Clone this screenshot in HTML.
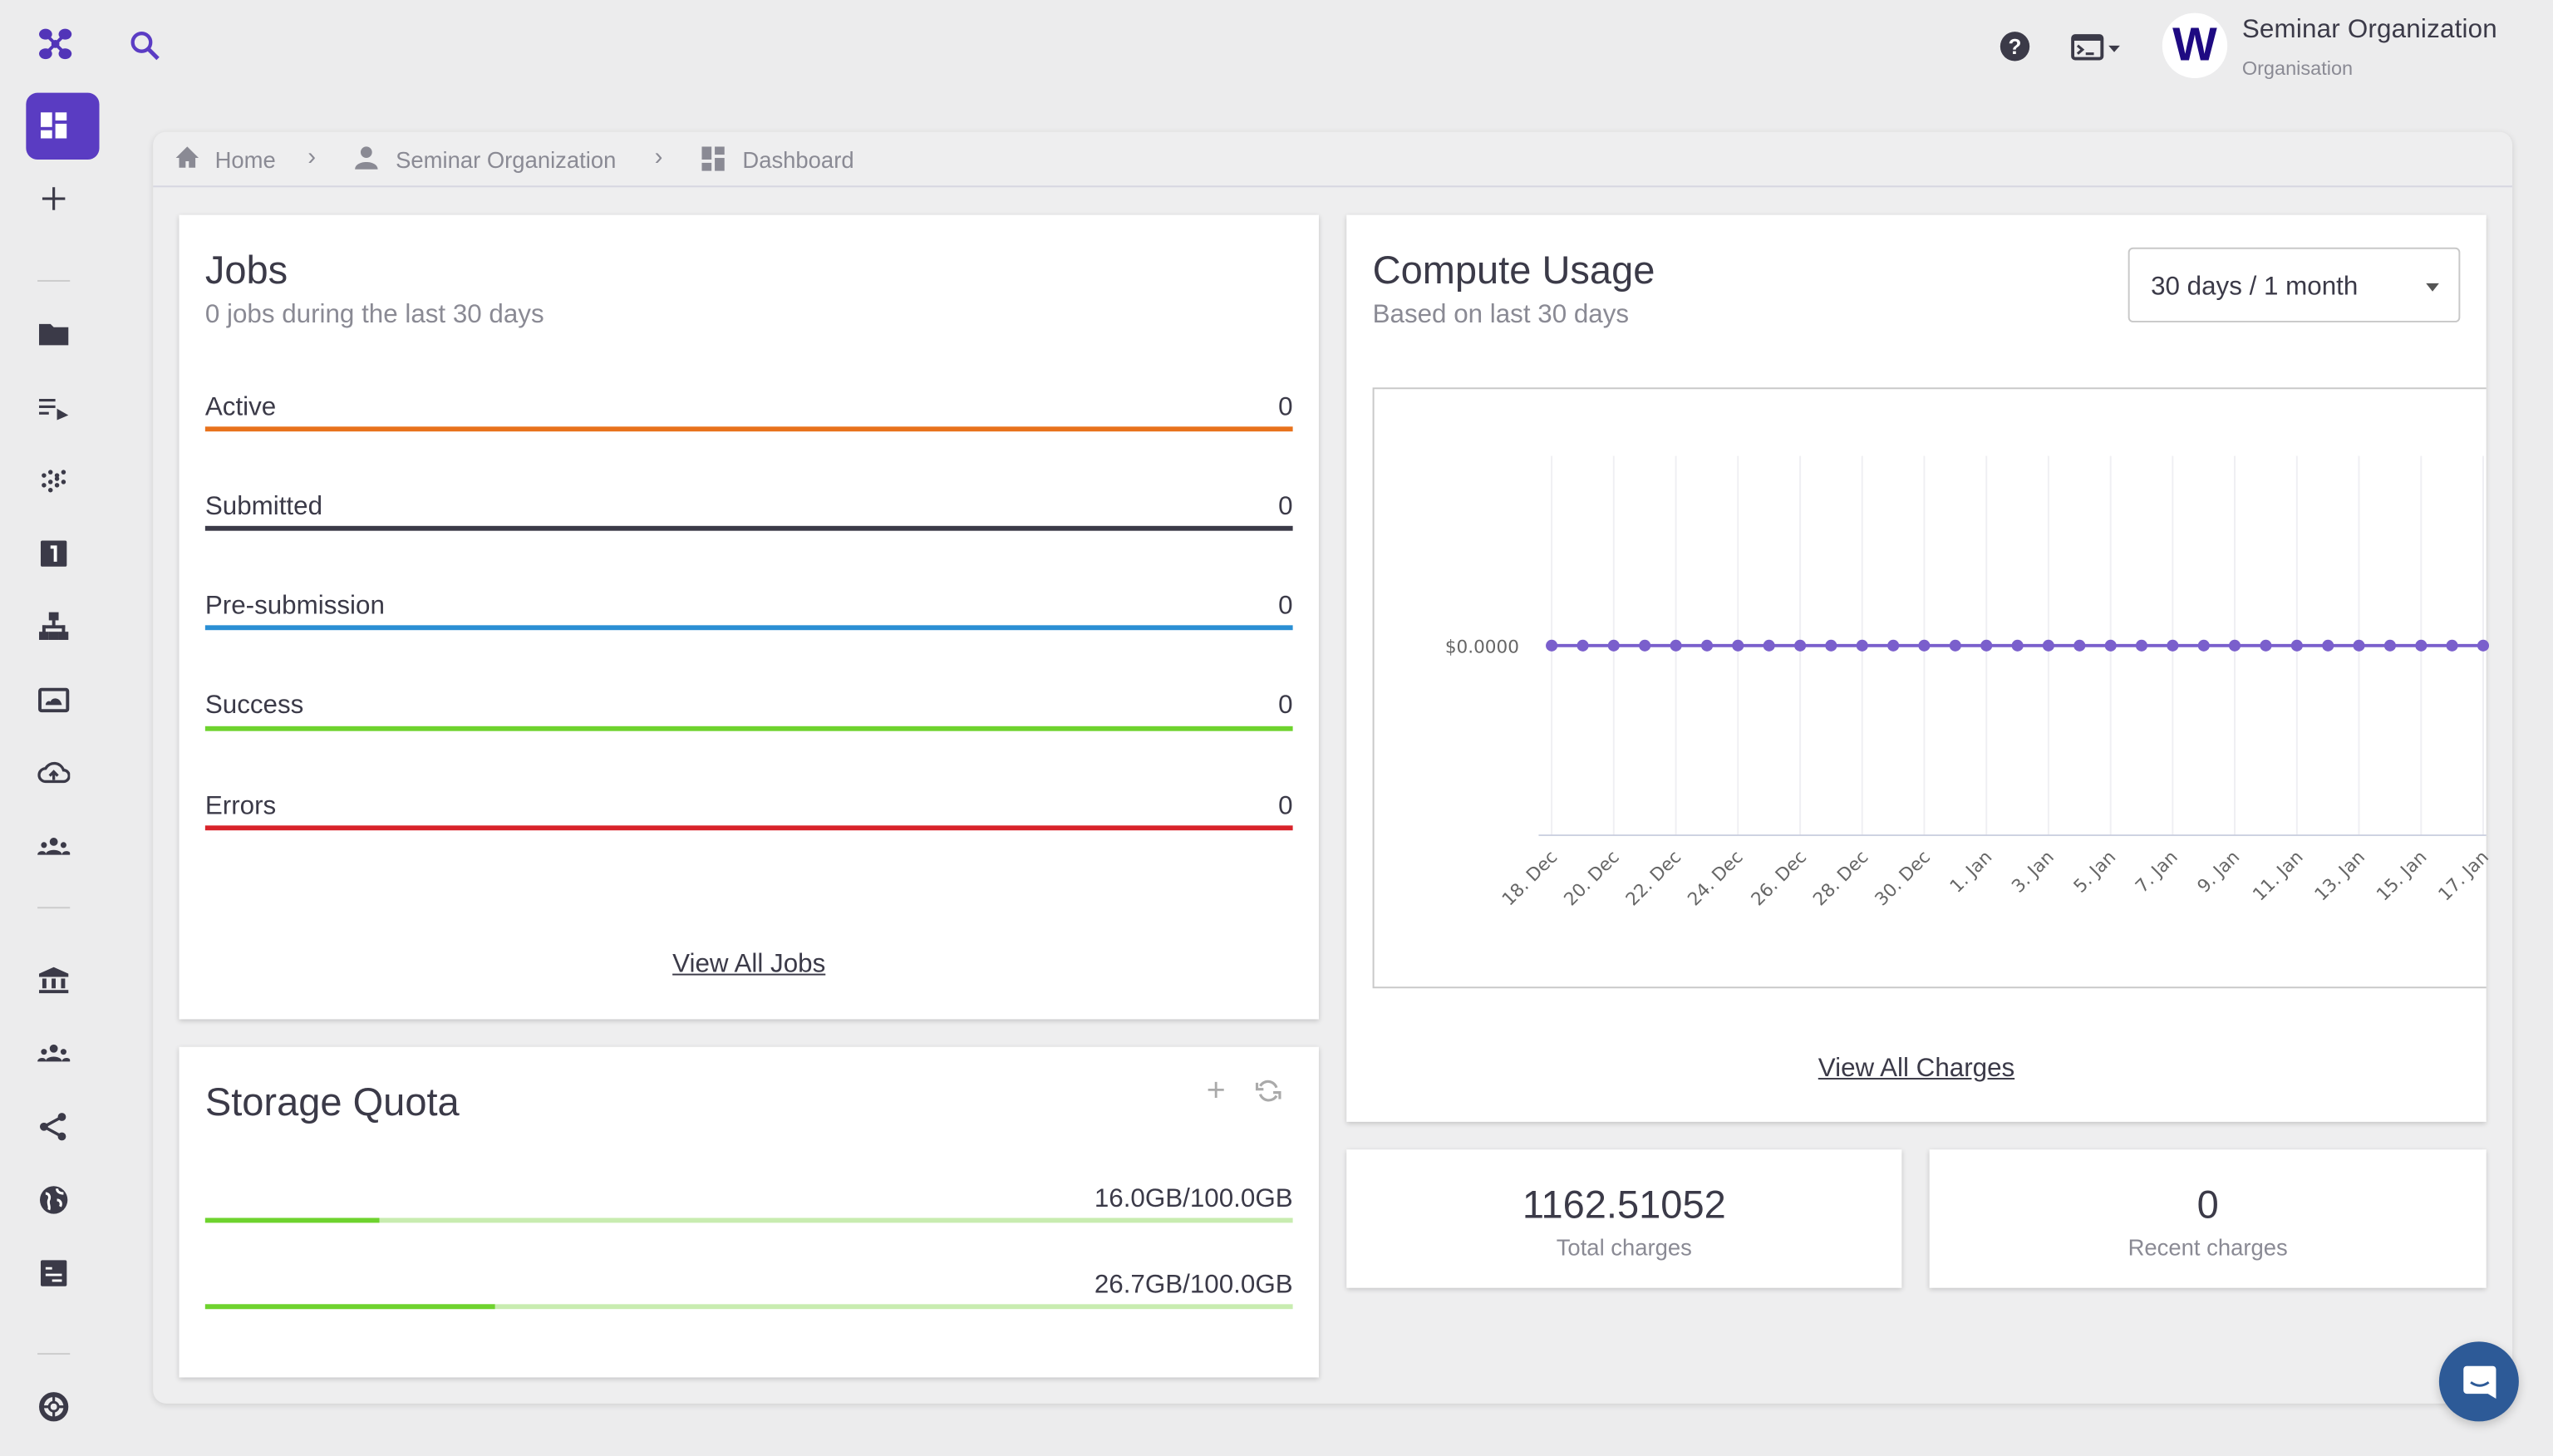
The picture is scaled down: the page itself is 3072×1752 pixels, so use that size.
<!DOCTYPE html>
<html><head><meta charset="utf-8"><style>
*{margin:0;padding:0;box-sizing:border-box}
html,body{width:3072px;height:1752px;overflow:hidden;background:#ececed}
#r{position:absolute;left:0;top:0;width:1568px;height:894px;transform:scale(1.9592);transform-origin:0 0;font-family:"Liberation Sans",sans-serif;color:#3b3a48}
.a{position:absolute}
.card{position:absolute;background:#fff;box-shadow:0 1px 3px rgba(0,0,0,.18)}
.lbl{position:absolute;left:16px;right:16px;font-size:16px;color:#3b3a48}
.lbl span{position:absolute;right:0}
.bar{position:absolute;left:16px;right:16px;height:3px}
.ic{position:absolute;left:23px;width:20px;height:20px}
.div{position:absolute;left:23px;width:20px;height:1px;background:#ccc}
</style></head><body><div id="r">
<svg class="a" style="left:23px;top:17px" width="22" height="20" viewBox="0 0 22 20"><g fill="#5235b8"><ellipse cx="5" cy="4" rx="4" ry="3.3"/><ellipse cx="17" cy="4" rx="4" ry="3.3"/><ellipse cx="5" cy="16" rx="4" ry="3.3"/><ellipse cx="17" cy="16" rx="4" ry="3.3"/><circle cx="11" cy="10" r="2.5"/></g><path d="M5 4L11 10L17 4M5 16L11 10L17 16" stroke="#5235b8" stroke-width="2" fill="none"/></svg>
<svg class="a" style="left:79px;top:18px" width="20" height="20" viewBox="0 0 20 20"><circle cx="8" cy="8" r="5.5" stroke="#5b3cc4" stroke-width="2.2" fill="none"/><path d="M12 12L18 18" stroke="#5b3cc4" stroke-width="2.5"/></svg>
<div class="a" style="left:16px;top:57px;width:45px;height:41px;background:#5a3cc2;border-radius:7px"></div>
<svg class="a" style="left:25px;top:69px" width="16" height="16" viewBox="0 0 16 16" fill="#fff"><rect x="0" y="0" width="7" height="9"/><rect x="9" y="0" width="7" height="5"/><rect x="0" y="11" width="7" height="5"/><rect x="9" y="7" width="7" height="9"/></svg>
<svg class="a" style="left:25px;top:114px" width="16" height="16"><path d="M8 1V15M1 8H15" stroke="#3b3a48" stroke-width="1.6"/></svg>
<div class="div" style="top:172px"></div>
<svg class="ic" style="top:195px" viewBox="0 0 20 20" fill="#3b3a48"><path d="M1 4h7l2 2h9v11H1z"/></svg>
<svg class="ic" style="top:240px" viewBox="0 0 20 20" fill="#3b3a48"><rect x="1" y="5" width="10" height="1.6"/><rect x="1" y="9" width="10" height="1.6"/><rect x="1" y="13" width="6" height="1.6"/><path d="M12 11l7 4-7 3z"/></svg>
<svg class="ic" style="top:285px" viewBox="0 0 20 20" fill="#3b3a48"><circle cx="4" cy="7" r="1.4"/><circle cx="8" cy="5" r="1.4"/><circle cx="12" cy="7" r="1.4"/><circle cx="16" cy="5" r="1.4"/><circle cx="4" cy="13" r="1.4"/><circle cx="8" cy="11" r="1.4"/><circle cx="12" cy="13" r="1.4"/><circle cx="16" cy="11" r="1.4"/><circle cx="8" cy="16" r="1.4"/><circle cx="12" cy="9" r="1.4"/></svg>
<svg class="ic" style="top:330px" viewBox="0 0 20 20"><rect x="2" y="2" width="16" height="16" rx="1" fill="#3b3a48"/><path d="M8 6h3v9" stroke="#fff" stroke-width="2" fill="none"/></svg>
<svg class="ic" style="top:375px" viewBox="0 0 20 20" fill="#3b3a48"><rect x="7" y="1" width="6" height="5"/><rect x="9" y="6" width="2" height="4"/><rect x="3" y="9" width="14" height="2"/><rect x="3" y="9" width="2" height="5"/><rect x="15" y="9" width="2" height="5"/><rect x="1" y="13" width="6" height="5"/><rect x="7" y="13" width="6" height="5"/><rect x="13" y="13" width="6" height="5"/></svg>
<svg class="ic" style="top:420px" viewBox="0 0 20 20"><rect x="1.5" y="3.5" width="17" height="13" rx="1" stroke="#3b3a48" stroke-width="2" fill="none"/><path d="M5 13c0-2 2-3 3-2 1-3 6-3 7 2z" fill="#3b3a48"/></svg>
<svg class="ic" style="top:465px" viewBox="0 0 20 20"><path d="M5 15a4 4 0 0 1 0-8 6 6 0 0 1 11 1 3.5 3.5 0 0 1 0 7z" stroke="#3b3a48" stroke-width="1.7" fill="none"/><path d="M10 14V9M7.5 11.5L10 9l2.5 2.5" stroke="#3b3a48" stroke-width="1.7" fill="none"/></svg>
<svg class="ic" style="top:510px" viewBox="0 0 20 20" fill="#3b3a48"><circle cx="10" cy="7" r="2.5"/><path d="M5 15c0-4 10-4 10 0z"/><circle cx="4" cy="9" r="1.8"/><path d="M0 15c0-3 6-3 5 0z"/><circle cx="16" cy="9" r="1.8"/><path d="M15 15c0-3 6-3 5 0z"/></svg>
<div class="div" style="top:557px"></div>
<svg class="ic" style="top:592px" viewBox="0 0 20 20" fill="#3b3a48"><path d="M10 2L1 6v2h18V6z"/><rect x="3" y="9" width="2.5" height="6"/><rect x="8.7" y="9" width="2.5" height="6"/><rect x="14.5" y="9" width="2.5" height="6"/><rect x="1" y="16" width="18" height="2"/></svg>
<svg class="ic" style="top:637px" viewBox="0 0 20 20" fill="#3b3a48"><circle cx="10" cy="7" r="2.5"/><path d="M5 15c0-4 10-4 10 0z"/><circle cx="4" cy="9" r="1.8"/><path d="M0 15c0-3 6-3 5 0z"/><circle cx="16" cy="9" r="1.8"/><path d="M15 15c0-3 6-3 5 0z"/></svg>
<svg class="ic" style="top:682px" viewBox="0 0 20 20"><path d="M15 4L4 10L15 16" stroke="#3b3a48" stroke-width="1.8" fill="none"/><circle cx="15" cy="4" r="2.5" fill="#3b3a48"/><circle cx="4" cy="10" r="2.5" fill="#3b3a48"/><circle cx="15" cy="16" r="2.5" fill="#3b3a48"/></svg>
<svg class="ic" style="top:727px" viewBox="0 0 20 20"><circle cx="10" cy="10" r="8.5" fill="#3b3a48"/><path d="M5 6c2 0 3 2 2 4s1 4 0 6M12 3c0 2 2 3 4 3M12 10c2 0 3 2 2 4" stroke="#fff" stroke-width="1.6" fill="none"/></svg>
<svg class="ic" style="top:772px" viewBox="0 0 20 20"><rect x="2" y="2" width="16" height="16" rx="1" fill="#3b3a48"/><path d="M5 7h4M5 11h10M9 14.5h6" stroke="#fff" stroke-width="1.5"/></svg>
<div class="div" style="top:831px"></div>
<svg class="ic" style="top:854px" viewBox="0 0 20 20"><circle cx="10" cy="10" r="7.5" stroke="#3b3a48" stroke-width="3" fill="none"/><circle cx="10" cy="10" r="2.8" stroke="#3b3a48" stroke-width="1.5" fill="none"/><path d="M10 2v6M10 12v6M2 10h6M12 10h6" stroke="#3b3a48" stroke-width="1.6"/></svg>

<svg class="a" style="left:1228px;top:19px" width="19" height="19" viewBox="0 0 20 20"><circle cx="10" cy="10" r="9.5" fill="#3b3a48"/><text x="10" y="15" font-size="14" font-weight="bold" fill="#fff" text-anchor="middle" font-family="Liberation Sans">?</text></svg>
<svg class="a" style="left:1272px;top:20px" width="32" height="18" viewBox="0 0 32 18"><rect x="1" y="2" width="18" height="14" rx="1.5" stroke="#3b3a48" stroke-width="2" fill="none"/><rect x="1" y="2" width="18" height="3" fill="#3b3a48"/><path d="M4 8l3 2.5-3 2.5M9 13h5" stroke="#3b3a48" stroke-width="1.6" fill="none"/><path d="M23 8h7l-3.5 4z" fill="#3b3a48"/></svg>
<div class="a" style="left:1328px;top:8px;width:40px;height:40px;border-radius:50%;background:#fff;text-align:center;font:bold 29px/40px 'Liberation Sans',sans-serif;color:#1e0a82">W</div>
<div class="a" style="left:1377px;top:10px;font-size:16px;color:#3b3a48;letter-spacing:.1px">Seminar Organization</div>
<div class="a" style="left:1377px;top:35px;font-size:12px;color:#8a8a94">Organisation</div>

<div class="a" style="left:94px;top:81px;width:1449px;height:781px;background:#eeeeef;border-radius:8px;box-shadow:0 1px 4px rgba(0,0,0,.12)"></div>
<div class="a" style="left:94px;top:114px;width:1449px;height:1px;background:#d6d6e0"></div>
<svg class="a" style="left:107px;top:89px" width="16" height="16" viewBox="0 0 16 16"><path d="M8 1L1 8h2v6h4v-4h2v4h4V8h2z" fill="#8a8a94"/></svg>
<div class="a" style="left:132px;top:90px;font-size:14px;color:#8a8a94">Home</div>
<div class="a" style="left:189px;top:88px;font-size:15px;color:#8a8a94">›</div>
<svg class="a" style="left:218px;top:89px" width="14" height="16" viewBox="0 0 14 16"><circle cx="7" cy="4.5" r="3.5" fill="#8a8a94"/><path d="M0 15c0-6 14-6 14 0z" fill="#8a8a94"/></svg>
<div class="a" style="left:243px;top:90px;font-size:14px;color:#8a8a94">Seminar Organization</div>
<div class="a" style="left:402px;top:88px;font-size:15px;color:#8a8a94">›</div>
<svg class="a" style="left:431px;top:90px" width="14" height="15" viewBox="0 0 14 15" fill="#8a8a94"><rect x="0" y="0" width="6" height="8"/><rect x="8" y="0" width="6" height="5"/><rect x="0" y="10" width="6" height="5"/><rect x="8" y="7" width="6" height="8"/></svg>
<div class="a" style="left:456px;top:90px;font-size:14px;color:#8a8a94">Dashboard</div>

<div class="card" style="left:110px;top:132px;width:700px;height:494px">
 <div class="a" style="left:16px;top:21px;font-size:24px;color:#3b3a48">Jobs</div>
 <div class="a" style="left:16px;top:53px;font-size:16px;color:#8a8a94">0 jobs during the last 30 days</div>
 <div class="lbl" style="top:110px">Active<span>0</span></div><div class="bar" style="top:130px;background:#e8721c"></div>
 <div class="lbl" style="top:171px">Submitted<span>0</span></div><div class="bar" style="top:191px;background:#3b3a48"></div>
 <div class="lbl" style="top:232px">Pre-submission<span>0</span></div><div class="bar" style="top:252px;background:#2a8fd4"></div>
 <div class="lbl" style="top:293px">Success<span>0</span></div><div class="bar" style="top:314px;background:#6ed32e"></div>
 <div class="lbl" style="top:355px">Errors<span>0</span></div><div class="bar" style="top:375px;background:#d8232a"></div>
 <div class="a" style="left:0;right:0;top:452px;text-align:center;font-size:16px;text-decoration:underline">View All Jobs</div>
</div>

<div class="card" style="left:110px;top:643px;width:700px;height:203px">
 <div class="a" style="left:16px;top:21px;font-size:24px">Storage Quota</div>
 <div class="a" style="left:631px;top:16px;font-size:20px;color:#aaa">+</div>
 <svg class="a" style="left:661px;top:19px" width="16" height="16" viewBox="0 0 16 16"><path d="M13 6A5.5 5.5 0 0 0 3 5M3 10a5.5 5.5 0 0 0 10 1" stroke="#aaa" stroke-width="1.6" fill="none"/><path d="M1 3v4h4M15 13V9h-4" stroke="#aaa" stroke-width="1.6" fill="none"/></svg>
 <div class="lbl" style="top:85px"><span>16.0GB/100.0GB</span></div>
 <div class="bar" style="top:105px;background:#c8ecb0"><div style="width:16%;height:3px;background:#6ed32e"></div></div>
 <div class="lbl" style="top:138px"><span>26.7GB/100.0GB</span></div>
 <div class="bar" style="top:158px;background:#c8ecb0"><div style="width:26.7%;height:3px;background:#6ed32e"></div></div>
</div>

<div class="card" style="left:827px;top:132px;width:700px;height:557px;overflow:hidden">
 <div class="a" style="left:16px;top:21px;font-size:24px">Compute Usage</div>
 <div class="a" style="left:16px;top:53px;font-size:16px;color:#8a8a94">Based on last 30 days</div>
 <div class="a" style="left:480px;top:20px;width:204px;height:46px;border:1px solid #c8c8c8;border-radius:3px;font-size:16px;padding:15px 13px">30 days / 1 month<span style="position:absolute;right:12px;top:21px;border:4.5px solid transparent;border-top:5px solid #555"></span></div>
 <div class="a" style="left:16px;top:106px;width:700px;height:369px;border:1px solid #c8c8c8"></div>
 <div class="a" style="left:0;right:0;top:516px;text-align:center;font-size:16px;text-decoration:underline">View All Charges</div>
</div>
<svg class="a" style="left:0;top:0;overflow:visible" width="1527" height="894">
 <g stroke="#efeff3" stroke-width="1">
 <line x1="953" y1="280" x2="953" y2="513"/><line x1="991.1" y1="280" x2="991.1" y2="513"/><line x1="1029.3" y1="280" x2="1029.3" y2="513"/><line x1="1067.4" y1="280" x2="1067.4" y2="513"/><line x1="1105.6" y1="280" x2="1105.6" y2="513"/><line x1="1143.7" y1="280" x2="1143.7" y2="513"/><line x1="1181.8" y1="280" x2="1181.8" y2="513"/><line x1="1220" y1="280" x2="1220" y2="513"/><line x1="1258.1" y1="280" x2="1258.1" y2="513"/><line x1="1296.3" y1="280" x2="1296.3" y2="513"/><line x1="1334.4" y1="280" x2="1334.4" y2="513"/><line x1="1372.5" y1="280" x2="1372.5" y2="513"/><line x1="1410.7" y1="280" x2="1410.7" y2="513"/><line x1="1448.8" y1="280" x2="1448.8" y2="513"/><line x1="1487" y1="280" x2="1487" y2="513"/><line x1="1525.1" y1="280" x2="1525.1" y2="513"/>
 </g>
 <line x1="945" y1="513" x2="1527" y2="513" stroke="#ccd0e0" stroke-width="1"/>
 <text x="933" y="401" font-size="11" fill="#666" text-anchor="end" font-family="DejaVu Sans">$0.0000</text>
 <line x1="953" y1="396.5" x2="1527" y2="396.5" stroke="#7a5fcc" stroke-width="2"/>
 <g fill="#7a5fcc">
 <circle cx="953" cy="396.5" r="3.6"/><circle cx="972.1" cy="396.5" r="3.6"/><circle cx="991.1" cy="396.5" r="3.6"/><circle cx="1010.2" cy="396.5" r="3.6"/><circle cx="1029.3" cy="396.5" r="3.6"/><circle cx="1048.4" cy="396.5" r="3.6"/><circle cx="1067.4" cy="396.5" r="3.6"/><circle cx="1086.5" cy="396.5" r="3.6"/><circle cx="1105.6" cy="396.5" r="3.6"/><circle cx="1124.6" cy="396.5" r="3.6"/><circle cx="1143.7" cy="396.5" r="3.6"/><circle cx="1162.8" cy="396.5" r="3.6"/><circle cx="1181.8" cy="396.5" r="3.6"/><circle cx="1200.9" cy="396.5" r="3.6"/><circle cx="1220" cy="396.5" r="3.6"/><circle cx="1239.1" cy="396.5" r="3.6"/><circle cx="1258.1" cy="396.5" r="3.6"/><circle cx="1277.2" cy="396.5" r="3.6"/><circle cx="1296.3" cy="396.5" r="3.6"/><circle cx="1315.3" cy="396.5" r="3.6"/><circle cx="1334.4" cy="396.5" r="3.6"/><circle cx="1353.5" cy="396.5" r="3.6"/><circle cx="1372.5" cy="396.5" r="3.6"/><circle cx="1391.6" cy="396.5" r="3.6"/><circle cx="1410.7" cy="396.5" r="3.6"/><circle cx="1429.8" cy="396.5" r="3.6"/><circle cx="1448.8" cy="396.5" r="3.6"/><circle cx="1467.9" cy="396.5" r="3.6"/><circle cx="1487" cy="396.5" r="3.6"/><circle cx="1506" cy="396.5" r="3.6"/><circle cx="1525.1" cy="396.5" r="3.6"/>
 </g>
 <g font-size="11" fill="#666" text-anchor="end" font-family="DejaVu Sans">
 <text transform="translate(957,527) rotate(-45)">18. Dec</text><text transform="translate(995,527) rotate(-45)">20. Dec</text><text transform="translate(1033,527) rotate(-45)">22. Dec</text><text transform="translate(1071,527) rotate(-45)">24. Dec</text><text transform="translate(1110,527) rotate(-45)">26. Dec</text><text transform="translate(1148,527) rotate(-45)">28. Dec</text><text transform="translate(1186,527) rotate(-45)">30. Dec</text><text transform="translate(1224,527) rotate(-45)">1. Jan</text><text transform="translate(1262,527) rotate(-45)">3. Jan</text><text transform="translate(1300,527) rotate(-45)">5. Jan</text><text transform="translate(1338,527) rotate(-45)">7. Jan</text><text transform="translate(1376,527) rotate(-45)">9. Jan</text><text transform="translate(1415,527) rotate(-45)">11. Jan</text><text transform="translate(1453,527) rotate(-45)">13. Jan</text><text transform="translate(1491,527) rotate(-45)">15. Jan</text><text transform="translate(1529,527) rotate(-45)">17. Jan</text>
 </g>
</svg>

<div class="card" style="left:827px;top:706px;width:341px;height:85px;text-align:center">
 <div style="font-size:24px;margin-top:21px;color:#3b3a48">1162.51052</div>
 <div style="font-size:14px;color:#8a8a94;margin-top:3px">Total charges</div>
</div>
<div class="card" style="left:1185px;top:706px;width:342px;height:85px;text-align:center">
 <div style="font-size:24px;margin-top:21px;color:#3b3a48">0</div>
 <div style="font-size:14px;color:#8a8a94;margin-top:3px">Recent charges</div>
</div>

<div class="a" style="left:1498px;top:824px;width:49px;height:49px;border-radius:50%;background:#2d5a97;box-shadow:0 2px 6px rgba(0,0,0,.2)"></div>
<svg class="a" style="left:1512px;top:838px" width="22" height="22" viewBox="0 0 22 22"><path d="M3 1h16a2 2 0 0 1 2 2v18l-5-3H3a2 2 0 0 1-2-2V3a2 2 0 0 1 2-2z" fill="#fff"/><path d="M5.5 11q5.5 4 11 0" stroke="#2d5a97" stroke-width="1.5" fill="none"/></svg>
</div></body></html>
